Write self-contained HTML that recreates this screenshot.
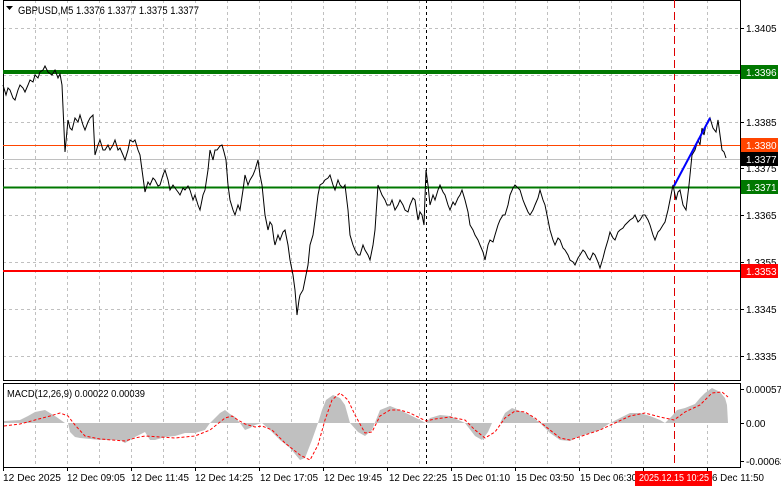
<!DOCTYPE html>
<html><head><meta charset="utf-8"><style>
html,body{margin:0;padding:0;background:#fff;}
svg{display:block;font-family:"Liberation Sans",sans-serif;}
</style></head><body>
<svg width="781" height="489" viewBox="0 0 781 489" xmlns="http://www.w3.org/2000/svg">
<rect width="781" height="489" fill="#fff"/>
<g stroke="#c0c0c0" stroke-dasharray="3,3" stroke-width="1">
<path d="M35.5 0V380M67.5 0V380M99.5 0V380M131.5 0V380M163.5 0V380M195.5 0V380M227.5 0V380M259.5 0V380M291.5 0V380M323.5 0V380M355.5 0V380M387.5 0V380M419.5 0V380M451.5 0V380M483.5 0V380M515.5 0V380M547.5 0V380M579.5 0V380M611.5 0V380M643.5 0V380M707.5 0V380"/>
<path d="M35.5 383V467M67.5 383V467M99.5 383V467M131.5 383V467M163.5 383V467M195.5 383V467M227.5 383V467M259.5 383V467M291.5 383V467M323.5 383V467M355.5 383V467M387.5 383V467M419.5 383V467M451.5 383V467M483.5 383V467M515.5 383V467M547.5 383V467M579.5 383V467M611.5 383V467M643.5 383V467M707.5 383V467"/>
<path d="M3 28.5H740M3 75.5H740M3 122.5H740M3 168.5H740M3 215.5H740M3 262.5H740M3 309.5H740M3 356.5H740"/>
</g>
<rect x="3.5" y="0.5" width="737" height="380" fill="none" stroke="#000"/>
<rect x="3.5" y="383.5" width="737" height="84" fill="none" stroke="#000"/>
<path d="M426.5 0V380M426.5 383V467" stroke="#000" stroke-dasharray="3,3"/>
<path d="M674.5 0V380M674.5 383V467" stroke="#d00" stroke-dasharray="8,4"/>
<path d="M3 72H740" stroke="#007800" stroke-width="4"/>
<path d="M3 145.5H740" stroke="#ff4500" stroke-width="1"/>
<path d="M3 159.5H740" stroke="#c0c0c0" stroke-width="1"/>
<path d="M3 187.5H740" stroke="#007800" stroke-width="2"/>
<path d="M3 271H740" stroke="#ff0000" stroke-width="2"/>
<polyline fill="none" stroke="#000" stroke-width="1" points="3,85 6,95 8,88 10,90 13,98 15,100 18,90 20,85 23,88 25,92 28,85 30,80 33,82 35,75 38,78 40,72 43,70 45,66 48,72 52,75 55,70 58,78 60,74 62,85 65,152 68,120 70,128 72,130 75,118 78,122 80,115 83,125 85,130 88,122 90,118 93,115 95,155 98,145 100,140 103,150 105,150 108,145 110,150 113,145 115,140 118,150 120,148 123,155 125,160 128,150 130,140 133,142 135,140 138,150 140,155 142,170 145,192 148,182 150,185 153,178 155,180 158,186 160,185 163,175 165,170 168,180 170,190 173,185 175,188 178,192 180,195 183,188 185,190 188,186 190,190 193,200 195,195 198,205 200,210 203,195 205,190 208,170 210,150 213,160 215,150 217,150 220,146 222,145 224,152 226,160 228,185 230,200 233,210 235,215 238,205 240,210 243,190 245,175 248,185 250,180 253,175 255,170 258,160 260,175 262,185 265,215 267,225 268,230 270,222 272,225 274,240 275,245 278,235 280,240 283,232 285,230 288,245 290,260 293,275 295,290 297,315 299,300 300,295 303,290 305,280 308,265 310,245 313,235 315,220 318,195 320,185 323,183 325,180 328,178 330,175 333,185 335,190 338,180 340,185 343,188 345,185 348,210 350,235 353,245 355,250 358,255 360,255 363,245 365,250 368,255 370,260 373,245 375,230 378,185 380,190 382,195 385,200 387,205 390,205 392,200 395,210 398,205 400,200 403,205 405,210 408,212 410,205 413,198 415,200 418,220 420,212 422,215 424,225 426,170 428,185 430,205 433,195 435,200 438,190 440,185 443,192 445,195 448,205 450,210 453,202 455,205 458,198 460,195 462,190 465,200 468,212 470,225 473,230 475,235 478,240 480,245 483,252 485,260 488,245 490,240 493,242 495,235 498,225 500,220 503,215 505,215 508,205 510,195 513,188 515,185 518,188 520,190 523,200 525,205 528,212 530,215 533,210 535,205 538,198 540,190 543,200 545,205 548,220 550,230 553,240 555,245 558,238 560,240 563,248 565,250 568,255 570,260 573,262 575,265 578,258 580,255 583,250 585,252 588,258 590,260 593,253 595,255 598,262 600,268 603,258 605,250 608,240 610,232 613,238 615,240 618,232 620,230 623,228 625,225 628,222 630,220 633,218 635,215 638,222 640,220 643,215 645,215 648,220 650,225 653,235 655,240 658,232 660,230 663,225 665,222 668,210 670,200 673,185 676,200 678,192 680,190 683,205 686,210 689,185 692,155 695,150 698,140 700,145 702,128 704,135 706,125 708,123 710,118 713,128 716,132 718,120 720,135 722,150 724,152 726,158"/>
<line x1="674" y1="186" x2="710" y2="118" stroke="#0000ff" stroke-width="2"/>
<polygon fill="#c0c0c0" points="4,423 4,421 20,420 28,416 35,412 45,410 55,416 65,423 68,423 70,432 75,437 80,438 100,440 120,440 125,443 130,440 135,437 145,432 150,440 155,440 165,437 175,436 185,433 195,433 205,430 210,423 215,418 220,413 225,410 230,414 235,417 240,423 245,430 250,428 255,425 262,423 270,430 280,440 290,448 300,460 305,458 312,440 318,423 322,410 326,400 333,395 340,398 345,405 350,423 358,432 365,436 372,430 380,410 390,406 400,410 410,415 420,420 426,423 430,418 440,415 450,416 465,423 475,436 482,440 488,432 492,423 500,423 505,413 512,408 520,411 530,415 540,423 550,433 560,440 570,441 580,436 590,433 600,430 610,423 620,418 630,413 640,413 650,416 660,420 665,423 672,416 677,410 685,408 695,404 700,398 705,393 712,388 720,392 725,398 727,405 728,423"/>
<polyline fill="none" stroke="#ff0000" stroke-dasharray="3,2" points="4,426 20,424 35,420 50,416 60,413 68,416 75,425 85,436 100,439 125,441 135,438 145,436 160,437 175,438 195,436 210,430 225,418 232,416 238,420 245,424 255,427 262,426 272,430 285,443 300,455 310,460 318,445 325,420 332,400 340,393 348,400 355,415 365,433 372,432 380,416 390,410 400,410 410,413 420,418 426,421 435,419 450,417 465,420 475,430 485,438 495,432 505,418 515,411 525,412 535,418 550,430 560,438 570,440 585,435 600,430 615,423 630,416 645,413 660,417 674,420 685,412 700,405 712,393 722,392 728,397"/>
<path d="M6 6H13L9.5 10Z" fill="#000"/>
<text x="18" y="14" font-size="11" fill="#000" textLength="181" lengthAdjust="spacingAndGlyphs">GBPUSD,M5  1.3376 1.3377 1.3375 1.3377</text>
<text x="7" y="397" font-size="10" fill="#000" textLength="138" lengthAdjust="spacingAndGlyphs">MACD(12,26,9) 0.00022 0.00039</text>
<g font-size="10" fill="#000">
<path d="M740 28.5h4M740 122.5h4M740 168.5h4M740 215.5h4M740 262.5h4M740 309.5h4M740 356.5h4M740 389.5h4M740 423.5h4M740 461.5h4" stroke="#000"/>
<text x="746" y="32">1.3405</text>
<text x="746" y="126">1.3385</text>
<text x="746" y="172">1.3375</text>
<text x="746" y="219">1.3365</text>
<text x="746" y="266">1.3355</text>
<text x="746" y="313">1.3345</text>
<text x="746" y="360">1.3335</text>
<text x="746" y="393">0.00057</text>
<text x="746" y="427">0.00</text>
<text x="746" y="465">-0.00063</text>
</g>
<rect x="741" y="65" width="37" height="14" fill="#007800"/>
<text x="746" y="76" font-size="10" fill="#fff">1.3396</text>
<rect x="741" y="138" width="37" height="14" fill="#ff4500"/>
<text x="746" y="149" font-size="10" fill="#fff">1.3380</text>
<rect x="741" y="152" width="37" height="14" fill="#000"/>
<text x="746" y="163" font-size="10" fill="#fff">1.3377</text>
<rect x="741" y="180" width="37" height="14" fill="#007800"/>
<text x="746" y="191" font-size="10" fill="#fff">1.3371</text>
<rect x="741" y="264" width="37" height="14" fill="#ff0000"/>
<text x="746" y="275" font-size="10" fill="#fff">1.3353</text>
<g font-size="10" fill="#000" lengthAdjust="spacingAndGlyphs">
<path d="M3.5 467v4M67.5 467v4M131.5 467v4M195.5 467v4M259.5 467v4M323.5 467v4M387.5 467v4M451.5 467v4M515.5 467v4M579.5 467v4M643.5 467v4M707.5 467v4" stroke="#000"/>
<text x="3" y="481" textLength="58" lengthAdjust="spacingAndGlyphs">12 Dec 2025</text>
<text x="67" y="481" textLength="58" lengthAdjust="spacingAndGlyphs">12 Dec 09:05</text>
<text x="131" y="481" textLength="58" lengthAdjust="spacingAndGlyphs">12 Dec 11:45</text>
<text x="195" y="481" textLength="58" lengthAdjust="spacingAndGlyphs">12 Dec 14:25</text>
<text x="260" y="481" textLength="58" lengthAdjust="spacingAndGlyphs">12 Dec 17:05</text>
<text x="324" y="481" textLength="58" lengthAdjust="spacingAndGlyphs">12 Dec 19:45</text>
<text x="389" y="481" textLength="58" lengthAdjust="spacingAndGlyphs">12 Dec 22:25</text>
<text x="452" y="481" textLength="58" lengthAdjust="spacingAndGlyphs">15 Dec 01:10</text>
<text x="516" y="481" textLength="58" lengthAdjust="spacingAndGlyphs">15 Dec 03:50</text>
<text x="580" y="481" textLength="57" lengthAdjust="spacingAndGlyphs">15 Dec 06:30</text>
<text x="712" y="481" textLength="52" lengthAdjust="spacingAndGlyphs">6 Dec 11:50</text>
</g>
<rect x="635" y="471" width="77" height="15" fill="#ff0000"/>
<text x="639" y="481" font-size="10" fill="#fff" textLength="70" lengthAdjust="spacingAndGlyphs">2025.12.15 10:25</text>
</svg>
</body></html>
